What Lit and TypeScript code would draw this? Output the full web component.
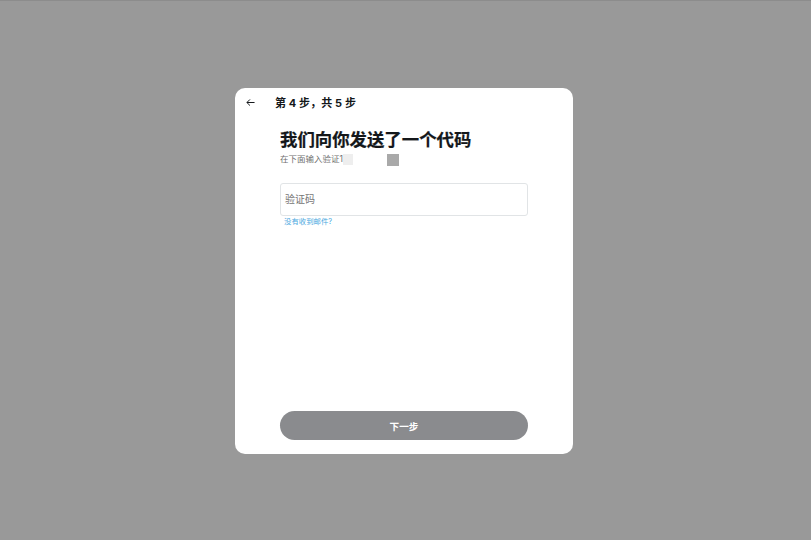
import { LitElement, html, css } from "lit";
import { customElement } from "lit/decorators.js";

@customElement("app-root")
export class AppRoot extends LitElement {
  static styles = css`
    :host {
      display: flex;
      width: 811px;
      height: 540px;
      background: #999999;
      border-top: 1px solid #8c8c8c;
      font-family: Inter, "Noto Sans CJK SC", "Liberation Sans", sans-serif;
      color: #14171a;
      box-sizing: border-box;
      padding: 87px 238px 86px 235px;
    }
    .card {
      flex: 1;
      background: #fff;
      border-radius: 10px;
      display: flex;
      flex-direction: column;
      padding: 0 45px 14px 45px;
    }
    .head {
      display: flex;
      align-items: center;
      height: 29px;
      margin-left: -35px;
    }
    .back {
      width: 9px;
      height: 9px;
      display: block;
      margin-left: 1px;
      margin-right: 20px;
    }
    .step {
      font-size: 11px;
      font-weight: 700;
      letter-spacing: 0.1px;
      line-height: 14px;
    }
    h1 {
      margin: 12px 0 0;
      font-size: 17.4px;
      line-height: 22px;
      font-weight: 700;
      color: #14171a;
      -webkit-text-stroke: 0.2px #14171a;
    }
    .sub {
      display: flex;
      align-items: center;
      height: 11px;
      margin-top: 3px;
      font-size: 8.5px;
      line-height: 11px;
      color: #6f6f6f;
    }
    .blk1 {
      width: 10px;
      height: 11px;
      background: #eeeeee;
    }
    .blk2 {
      width: 12px;
      height: 12px;
      background: #a9a9a9;
      margin-left: 34px;
    }
    .field {
      margin-top: 18px;
      height: 33px;
      box-sizing: border-box;
      border: 1px solid #e1e4e6;
      border-radius: 3px;
      display: flex;
      align-items: center;
      padding: 0 0 2px 4px;
      font-size: 10px;
      color: #757575;
    }
    .help {
      margin: 1px 0 0 4px;
      height: 10px;
      font-size: 7.4px;
      line-height: 10px;
      color: #4aa8e0;
    }
    .spacer {
      flex: 1;
    }
    .next {
      height: 29px;
      border-radius: 15px;
      background: #8a8b8e;
      color: #fff;
      font-size: 9.6px;
      font-weight: 700;
      display: flex;
      align-items: center;
      justify-content: center;
    }
  `;

  render() {
    return html`
      <div class="card">
        <div class="head">
          <svg class="back" viewBox="0 0 10 10" fill="none" stroke="#14171a" stroke-width="1.1">
            <path d="M9.5 5H1M4.4 1.6 1 5l3.4 3.4" />
          </svg>
          <span class="step">第 4 步，共 5 步</span>
        </div>
        <h1>我们向你发送了一个代码</h1>
        <div class="sub">在下面输入验证1<span class="blk1"></span><span class="blk2"></span></div>
        <div class="field">验证码</div>
        <div class="help">没有收到邮件?</div>
        <div class="spacer"></div>
        <div class="next">下一步</div>
      </div>
    `;
  }
}
